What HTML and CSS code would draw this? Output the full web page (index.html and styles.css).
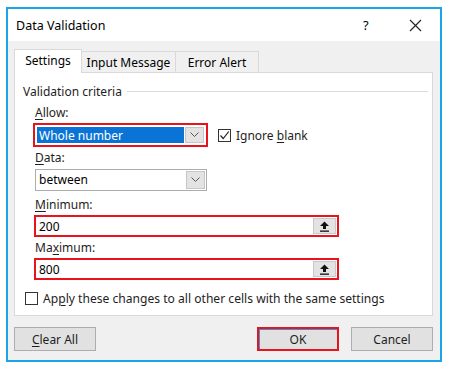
FILE: index.html
```html
<!DOCTYPE html>
<html lang="en">
<head>
  <meta charset="UTF-8" />
  <title>Data Validation</title>
  <link rel="stylesheet" href="styles.css">
</head>
<body>
  <div class="dialog">
    <div class="titlebar">
      <span class="title">Data Validation</span>
      <span class="help">?</span>
      <span class="close">
        <svg width="13" height="13" viewBox="0 0 13 13"><path d="M1 1 L12 12 M12 1 L1 12" stroke="#222" stroke-width="1.1" fill="none"/></svg>
      </span>
    </div>

    <div class="content">
      <div class="tabs">
        <div class="tab active">Settings</div>
        <div class="tab tab-input">Input Message</div>
        <div class="tab tab-error">Error Alert</div>
      </div>

      <div class="panel">
        <div class="group-title"><span>Validation criteria</span><span class="rule"></span></div>

        <div class="field-label label-allow"><u>A</u>llow:</div>
        <div class="row">
          <div class="combo combo-allow highlight">
            <span class="combo-value selected">Whole number</span>
            <span class="drop"><svg width="9" height="6" viewBox="0 0 9 6"><path d="M0.5 0.5 L4.5 4.5 L8.5 0.5" stroke="#555" fill="none"/></svg></span>
          </div>
          <label class="check check-ignore">
            <span class="box checked"><svg width="11" height="11" viewBox="0 0 11 11"><path d="M1.5 5.5 L4.2 8.5 L9.8 1.5" stroke="#222" stroke-width="1.2" fill="none"/></svg></span>
            <span>Ignore <u>b</u>lank</span>
          </label>
        </div>

        <div class="field-label label-data"><u>D</u>ata:</div>
        <div class="combo combo-data">
          <span class="combo-value">between</span>
          <span class="drop"><svg width="9" height="6" viewBox="0 0 9 6"><path d="M0.5 0.5 L4.5 4.5 L8.5 0.5" stroke="#555" fill="none"/></svg></span>
        </div>

        <div class="field-label label-min"><u>M</u>inimum:</div>
        <div class="ref-input highlight">
          <span class="ref-value">200</span>
          <span class="ref-btn"><svg width="11" height="11" viewBox="0 0 11 11"><path d="M5.5 0.5 L10 5 L7 5 L7 8 L4 8 L4 5 L1 5 Z" fill="#111"/><rect x="1" y="9.5" width="9" height="1.3" fill="#111"/></svg></span>
        </div>

        <div class="field-label label-max">Ma<u>x</u>imum:</div>
        <div class="ref-input highlight">
          <span class="ref-value">800</span>
          <span class="ref-btn"><svg width="11" height="11" viewBox="0 0 11 11"><path d="M5.5 0.5 L10 5 L7 5 L7 8 L4 8 L4 5 L1 5 Z" fill="#111"/><rect x="1" y="9.5" width="9" height="1.3" fill="#111"/></svg></span>
        </div>

        <label class="check check-apply">
          <span class="box"></span>
          <span>Ap<u>p</u>ly these changes to all other cells with the same settings</span>
        </label>
      </div>

      <div class="buttons">
        <button class="btn"><u>C</u>lear All</button>
        <span class="spacer"></span>
        <button class="btn btn-ok">OK</button>
        <button class="btn btn-cancel">Cancel</button>
      </div>
    </div>
  </div>
</body>
</html>
```

FILE: styles.css
```css
/* Page */
body {
  margin: 0;
  padding: 7px 0 0 6px;
  background-color: #fff;
  font-family: "Noto Sans", "Open Sans", sans-serif;
  font-size: 12px;
  color: #000;
}

u {
  text-decoration-thickness: 1px;
  text-underline-offset: 2px;
}

/* Dialog frame */
.dialog {
  box-sizing: border-box;
  width: 436px;
  height: 355px;
  border: 2px solid #17a6e8;
  background-color: #f0f0f0;
}

.titlebar {
  height: 32px;
  background-color: #fff;
  display: flex;
  align-items: center;
  padding-left: 8px;
}
.title {
  flex: 1;
  font-size: 12.5px;
}
.help {
  width: 20px;
  font-size: 13px;
  margin-right: 26px;
}
.close {
  display: flex;
  width: 13px;
  margin-right: 18px;
}

.content {
  padding: 8px 7px 0 6px;
}

/* Tabs */
.tabs {
  display: flex;
  align-items: flex-end;
  height: 23px;
  position: relative;
  z-index: 1;
}
.tab {
  box-sizing: border-box;
  height: 21px;
  border: 1px solid #d9d9d9;
  border-left: none;
  border-bottom: none;
  background-color: #f0f0f0;
  line-height: 21px;
  text-align: center;
}
.tab-input {
  width: 94px;
}
.tab-error {
  width: 83px;
}
.tab.active {
  height: 24px;
  width: 68px;
  border-left: 1px solid #d9d9d9;
  background-color: #fff;
  line-height: 22px;
  margin-bottom: -1px;
}

/* Panel */
.panel {
  box-sizing: border-box;
  height: 244px;
  border: 1px solid #d9d9d9;
  background-color: #fff;
  padding: 10px 0 0 20px;
  display: flex;
  flex-direction: column;
  align-items: flex-start;
}

.group-title {
  display: flex;
  align-items: center;
  margin-left: -12px;
  width: 405px;
  height: 16px;
  color: #1e1e1e;
}
.group-title .rule {
  flex: 1;
  height: 1px;
  margin-left: 5px;
  background-color: #dcdcdc;
}

.field-label {
  height: 16px;
  line-height: 16px;
  color: #1e1e1e;
}
.label-allow { margin-top: 6px; }
.label-data { margin-top: 3px; }
.label-min { margin-top: 6px; }
.label-max { margin-top: 3px; }

.row {
  display: flex;
  align-items: center;
  margin-top: 2px;
  margin-left: -2px;
}

/* Combo boxes */
.combo {
  box-sizing: border-box;
  display: flex;
  align-items: stretch;
  border: 1px solid #adadad;
  background-color: #fff;
}
.combo-allow {
  width: 175px;
  height: 24px;
  padding: 2px;
}
.combo-data {
  width: 172px;
  height: 22px;
  margin-top: 3px;
  padding: 1px;
}
.highlight {
  border: 2px solid #e8141c;
}
.combo-value {
  flex: 1;
  padding-left: 2px;
  line-height: 18px;
}
.combo-value.selected {
  background-color: #0a74d6;
  color: #fff;
  margin-right: 1px;
}
.drop {
  box-sizing: border-box;
  width: 19px;
  display: flex;
  align-items: center;
  justify-content: center;
  background-color: #e3e3e3;
  border: 1px solid #c6c6c6;
}

/* Checkboxes */
.check {
  display: flex;
  align-items: center;
  color: #1e1e1e;
}
.check-ignore {
  margin-left: 10px;
}
.check-apply {
  margin-top: 10px;
  margin-left: -10px;
  height: 16px;
  font-size: 12.1px;
}
.box {
  box-sizing: border-box;
  width: 13px;
  height: 13px;
  border: 1px solid #333;
  margin-right: 5px;
  display: flex;
  align-items: center;
  justify-content: center;
  background-color: #fff;
}

/* Reference inputs */
.ref-input {
  box-sizing: border-box;
  width: 305px;
  height: 22px;
  margin-top: 2px;
  margin-left: -1px;
  display: flex;
  align-items: stretch;
  padding: 1px;
  background-color: #fff;
}
.ref-value {
  flex: 1;
  padding-left: 2px;
  line-height: 18px;
}
.ref-btn {
  box-sizing: border-box;
  width: 23px;
  display: flex;
  align-items: center;
  justify-content: center;
  background-color: #e3e3e3;
  border: 1px solid #c9c9c9;
}

/* Bottom buttons */
.buttons {
  display: flex;
  margin-top: 11px;
}
.spacer {
  flex: 1;
}
.btn {
  box-sizing: border-box;
  width: 82px;
  height: 24px;
  border: 1px solid #adadad;
  background-color: #e1e1e1;
  font-family: inherit;
  font-size: 12px;
  color: #1e1e1e;
  padding: 0;
}
.btn-ok {
  border: 2px solid #e8141c;
  box-shadow: inset 1px 1px 0 #3c8fd8;
  margin-right: 12px;
}
```
